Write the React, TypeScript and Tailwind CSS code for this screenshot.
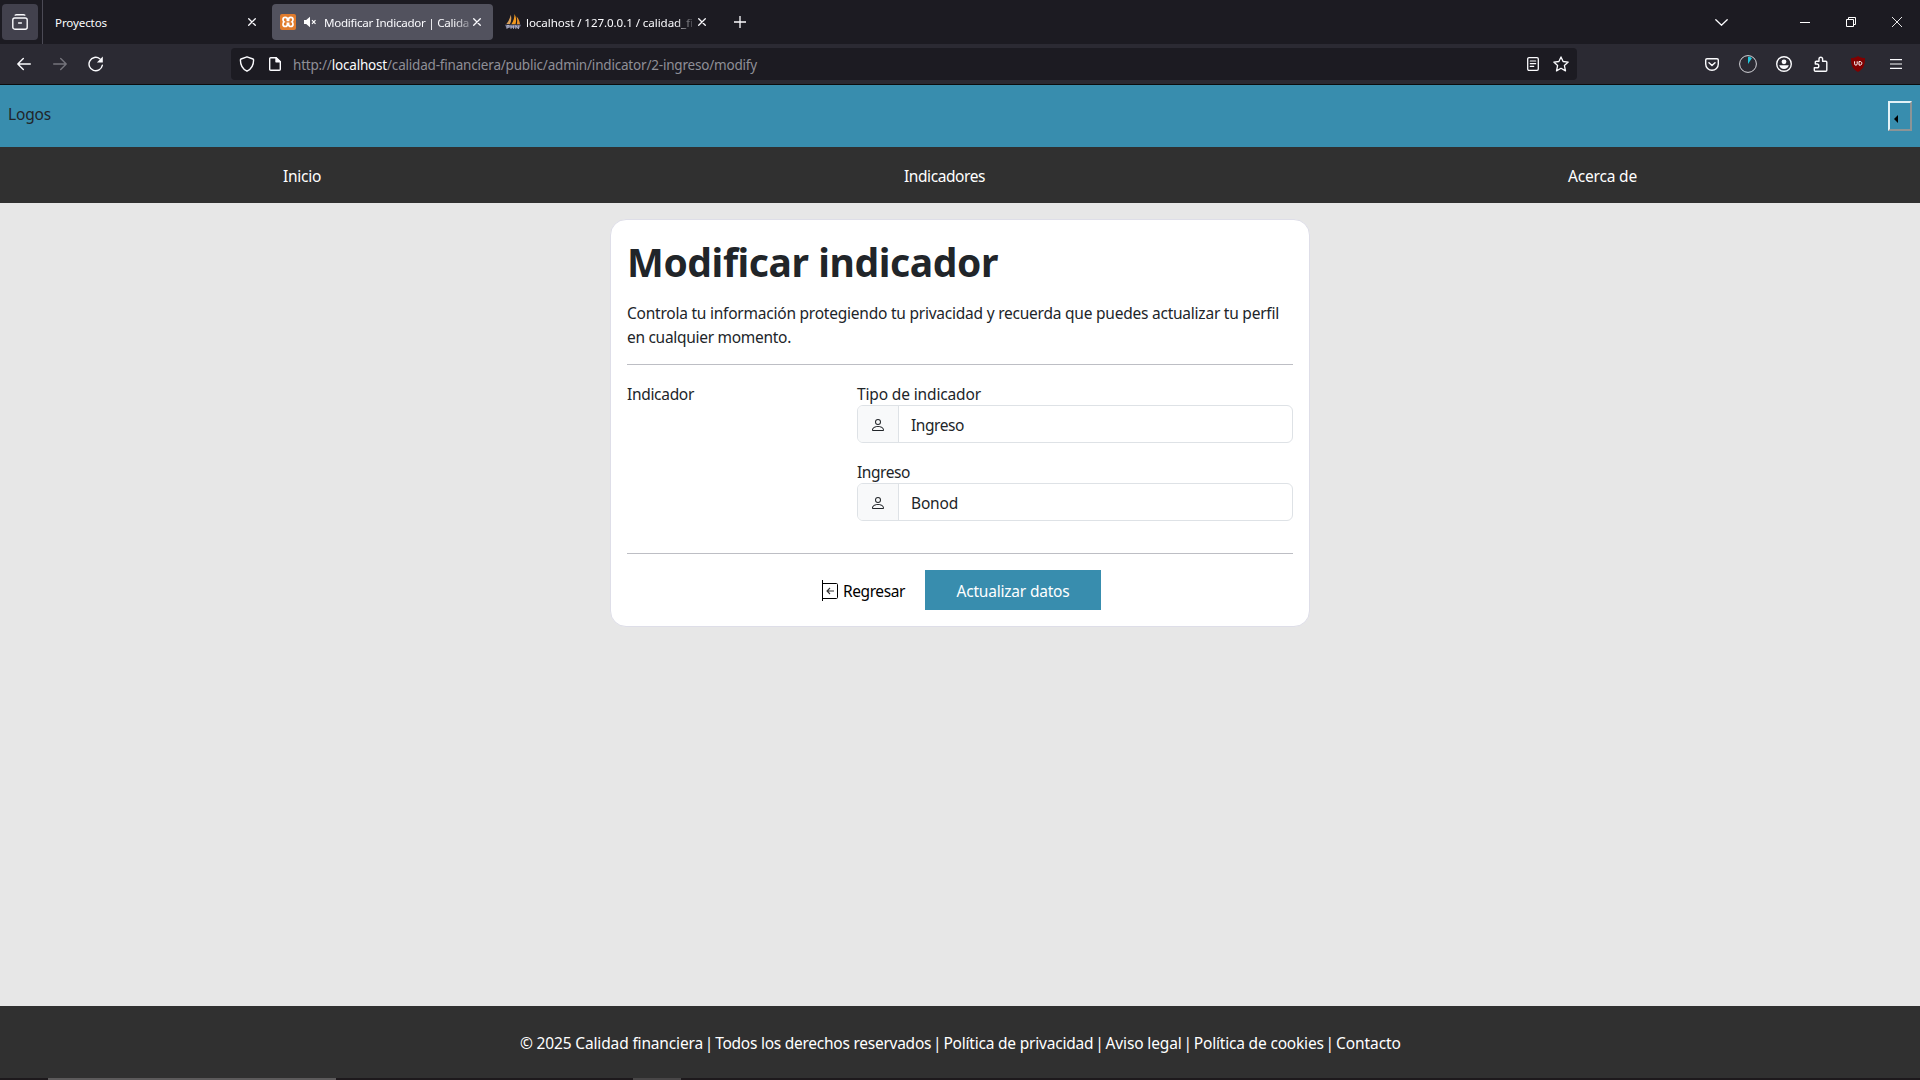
import { Fragment, useLayoutEffect, useRef, type ReactNode } from "react";

/* Spreads its letters so that the line takes exactly `width` pixels. */
function Fit({ width, className = "", children }: { width: number; className?: string; children: ReactNode }) {
  const ref = useRef<HTMLSpanElement>(null);
  useLayoutEffect(() => {
    const el = ref.current;
    if (!el) return;
    el.style.letterSpacing = "0px";
    const count = (el.textContent ?? "").length;
    const natural = el.getBoundingClientRect().width;
    el.style.letterSpacing = `${(width - natural) / count}px`;
  }, [width]);
  return (
    <span ref={ref} className={`inline-block whitespace-pre ${className}`}>
      {children}
    </span>
  );
}

function Close({ className = "" }: { className?: string }) {
  return (
    <svg className={`size-[8px] shrink-0 ${className}`} viewBox="0 0 8 8" stroke="#fbfbfe" strokeWidth="1.3" strokeLinecap="round">
      <path d="M.7.7l6.6 6.6M7.3.7L.7 7.3" />
    </svg>
  );
}

function TabBar() {
  return (
    <div className="flex h-[44px] items-center bg-[#1c1b22]">
      <div className="ml-[2px] flex size-9 items-center justify-center rounded-[4px] bg-[#42414d]">
        <svg className="size-4" viewBox="0 0 16 16" fill="none" stroke="#fbfbfe" strokeWidth="1.4" strokeLinecap="round">
          <path d="M3.2 1.1C3.6.9 4 .8 4.500.8h7c.5 0 .9.1 1.300.3M6.600 9h2.800" />
          <rect x=".8" y="4" width="14.400" height="11.200" rx="2" />
        </svg>
      </div>
      <div className="ml-[4px] h-full w-px bg-[#4b4a55]" />
      <div className="ml-[3px] flex h-9 w-[220px] items-center pl-[9px] text-[11.6px] text-[#fbfbfe]">
        <Fit width={52} className="pt-px">Proyectos</Fit>
        <Close className="ml-auto mr-[10px]" />
      </div>
      <div className="ml-[6px] flex h-9 w-[221px] items-center rounded-[4px] bg-[#52525e] pl-[8px] text-[11.6px] text-[#fbfbfe]">
        <svg className="size-4 shrink-0" viewBox="0 0 16 16" fill="none">
          <rect width="16" height="16" rx="2" fill="#e07b2c" />
          <path
            d="M5.200 3.400C3.600 3.400 3 4.200 3 5.500c0 1 .4 1.900 1.100 2.400C3.300 8.400 3 9.200 3 10.200c0 1.500.8 2.300 2.200 2.300 1.500 0 2.200-.9 2.200-2.300V9.300h1.200v.9c0 1.400.7 2.300 2.200 2.300 1.400 0 2.200-.8 2.200-2.300 0-1-.3-1.800-1.100-2.300.7-.5 1.100-1.400 1.100-2.400 0-1.300-.6-2.100-2.200-2.100-1.300 0-2.200.8-2.200 2v1H7.400v-1c0-1.200-.9-2-2.200-2z"
            stroke="#fff"
            strokeWidth="1.700"
          />
        </svg>
        <svg className="ml-[8px] h-3 w-[12px] shrink-0" viewBox="0 0 12 12">
          <path d="M0 4h2.200L6 .7v10.600L2.200 8H0z" fill="#fff" />
          <path d="M8 4.200l3.500 3.600M11.500 4.200L8 7.800" stroke="#fff" strokeWidth="1.200" />
        </svg>
        <div className="ml-[8px] w-[145px] overflow-hidden pt-px [mask-image:linear-gradient(to_right,black_130px,transparent_152px)]">
          <Fit width={145}>Modificar Indicador | Calida</Fit>
        </div>
        <Close className="ml-auto mr-[12px]" />
      </div>
      <div className="ml-[4px] flex h-9 w-[221px] items-center pl-[8px] text-[11.6px] text-[#fbfbfe]">
        <svg className="size-4 shrink-0" viewBox="0 0 16 16">
          <path d="M5.800.8C6.600 4 6.500 7 5 10H1.300C3.600 7.300 5 4.200 5.800.8z" fill="#d9a05a" />
          <path d="M9.500 0c1.800 3.300 2.200 6.500 1 10.200H6.300C8.600 7 9.500 3.500 9.500 0z" fill="#f29a1f" />
          <path d="M11.500 2.600c2 2 3.200 4.500 3.500 7.600h-3.200c.6-2.500.5-5-.3-7.600z" fill="#e8912a" />
          <path d="M0 10.800h16l-1.300 3H1.300z" fill="#6f7390" />
          <path d="M2 15v-3.500h2v1.700H2M6 15v-3.500M6 13h2.500M8.500 15v-3.500M10.800 15v-3.500l2.700 3.500v-3.500" stroke="#b7b9cc" strokeWidth=".8" fill="none" />
        </svg>
        <div className="ml-[5px] w-[167px] overflow-hidden pt-px [mask-image:linear-gradient(to_right,black_150px,transparent_170px)]">
          <Fit width={167}>localhost / 127.0.0.1 / calidad_fi</Fit>
        </div>
        <Close className="ml-auto mr-[12px]" />
      </div>
      <svg className="ml-[16px] size-3" viewBox="0 0 12 12" stroke="#fbfbfe" strokeWidth="1.300">
        <path d="M6 0v12M0 6h12" />
      </svg>
      <svg className="ml-auto h-[7px] w-[13px]" viewBox="0 0 13 7" fill="none" stroke="#fbfbfe" strokeWidth="1.300" strokeLinecap="round">
        <path d="M.8.7l5.700 5.500L12.200.7" />
      </svg>
      <div className="ml-[72px] h-px w-[10px] bg-white" />
      <svg className="ml-[36px] size-[10px]" viewBox="0 0 10 10" fill="none" stroke="#fff">
        <path d="M.5 2.500h7v7h-7zM2.500 2.500v-2h7v7h-2" />
      </svg>
      <svg className="ml-[36px] mr-[18px] size-[10px]" viewBox="0 0 10 10" stroke="#fff" strokeWidth=".9">
        <path d="M0 0l10 10M10 0L0 10" />
      </svg>
    </div>
  );
}

function Toolbar() {
  return (
    <div className="flex h-[41px] items-center border-b border-[#0c0c0d] bg-[#2b2a33]">
      <svg className="ml-[17px] size-[14px]" viewBox="0 0 14 14" fill="none" stroke="#fbfbfe" strokeWidth="1.400" strokeLinecap="round" strokeLinejoin="round">
        <path d="M13.300 7H.8M6.300 1.500L.8 7l5.500 5.500" />
      </svg>
      <svg className="ml-[22px] size-[14px]" viewBox="0 0 14 14" fill="none" stroke="#75747c" strokeWidth="1.400" strokeLinecap="round" strokeLinejoin="round">
        <path d="M.7 7h12.500M7.700 1.500L13.200 7l-5.500 5.500" />
      </svg>
      <svg className="ml-[21px] size-4" viewBox="0 0 16 16" fill="none">
        <path d="M14.300 9.300A6.700 6.700 0 1 1 11.800 2.700" stroke="#fbfbfe" strokeWidth="1.400" strokeLinecap="round" />
        <path d="M14.800.6v5.900H8.900z" fill="#fbfbfe" />
      </svg>
      <div className="ml-[127px] flex h-8 w-[1346px] items-center rounded-[4px] bg-[#1c1b22]">
        <svg className="ml-[8px] size-4" viewBox="0 0 16 16" fill="none" stroke="#fbfbfe" strokeWidth="1.400" strokeLinejoin="round">
          <path d="M8 .8l6 2.200c.4.200.6.500.6.900C14.600 9.500 12.300 13 8 15.200 3.700 13 1.400 9.500 1.400 3.900c0-.4.200-.7.600-.9z" />
        </svg>
        <svg className="ml-[14px] h-[14px] w-[12px]" viewBox="0 0 12 14" fill="none" stroke="#fbfbfe" strokeWidth="1.400" strokeLinejoin="round">
          <path d="M1.700.7h5.500l4.100 4v7.600c0 .6-.4 1-1 1H1.700c-.6 0-1-.4-1-1V1.700c0-.6.4-1 1-1z" />
          <path d="M7 .8v4h4.200z" fill="#fbfbfe" />
        </svg>
        <div className="ml-[12px] pt-[2px] text-[13.500px] leading-5 text-[#8f8f97]">
          <Fit width={464}>
            http://<span className="text-[#fbfbfe]">localhost</span>/calidad-financiera/public/admin/indicator/2-ingreso/modify
          </Fit>
        </div>
        <svg className="ml-auto h-[14px] w-[12px]" viewBox="0 0 12 14" fill="none" stroke="#fbfbfe" strokeWidth="1.300" strokeLinecap="round">
          <rect x=".7" y=".7" width="10.600" height="12.600" rx="1.300" />
          <path d="M3.300 4h5.400M3.300 6.700h5.400M3.300 9.400h3.400" strokeWidth="1.200" />
        </svg>
        <svg className="ml-[14px] mr-[8px] size-4" viewBox="0 0 16 16" fill="none" stroke="#fbfbfe" strokeWidth="1.300" strokeLinejoin="round">
          <path d="M8 .9l2.100 4.600 5.100.6-3.800 3.500 1.100 5.300L8 12.300l-4.500 2.600 1.100-5.300L.8 6.100l5.100-.6z" />
        </svg>
      </div>
      <svg className="ml-[128px] h-[13px] w-[14px]" viewBox="0 0 14 13" fill="none" stroke="#fbfbfe" strokeWidth="1.400" strokeLinecap="round" strokeLinejoin="round">
        <path d="M2 .8h10c.7 0 1.300.6 1.300 1.300V6A6.300 6.300 0 0 1 .7 6V2.100C.7 1.400 1.300.8 2 .8z" />
        <path d="M4 4.800l3 2.700 3-2.700" strokeWidth="1.500" />
      </svg>
      <svg className="ml-[20px] size-[18px]" viewBox="0 0 18 18">
        <circle cx="9" cy="9" r="8.400" fill="none" stroke="#d5d5da" />
        <path d="M9 9V1.800c1.600 0 2.800.4 4 1.200z" fill="#22c7dc" />
      </svg>
      <svg className="ml-[19px] size-4" viewBox="0 0 16 16">
        <circle cx="8" cy="8" r="7.300" fill="none" stroke="#fbfbfe" strokeWidth="1.400" />
        <circle cx="8" cy="5.800" r="2.400" fill="#fbfbfe" />
        <path d="M3.200 9.300h9.600A5 5 0 0 1 8 13a5 5 0 0 1-4.800-3.700z" fill="#fbfbfe" />
      </svg>
      <svg className="ml-[21px] h-4 w-[15px]" viewBox="0 0 15 16" fill="none" stroke="#fbfbfe" strokeWidth="1.400" strokeLinejoin="round">
        <path d="M2.300 15.200h10.500c.6 0 1-.4 1-1V6.300c0-.6-.4-1-1-1H9.600V3a1.800 1.800 0 0 0-3.600 0v2.300H3.300c-.6 0-1 .4-1 1V8h1.600a1.700 1.700 0 0 1 0 3.800H1.300v2.400c0 .6.400 1 1 1z" />
      </svg>
      <svg className="ml-[22px] size-4" viewBox="0 0 16 16" fill="none">
        <path d="M8 0c2 1.500 4.300 2 7 2 0 7-1 10.500-7 14C2 12.500 1 9 1 2c2.700 0 5-.5 7-2z" fill="#800000" />
        <path d="M4.600 5.300v2.500c0 .9.500 1.400 1.300 1.400s1.300-.5 1.300-1.400V5.300M9 5.500h1c1.200 0 1.800.7 1.800 1.800S11.200 9.100 10 9.100H9z" stroke="#fff" />
      </svg>
      <svg className="ml-auto mr-[18px] h-[10px] w-[12px]" viewBox="0 0 12 10" stroke="#fbfbfe" strokeWidth="1.200">
        <path d="M0 .7h12M0 5h12M0 9.300h12" />
      </svg>
    </div>
  );
}

function Field({ label, labelWidth, value, valueWidth }: { label: string; labelWidth: number; value: string; valueWidth: number }) {
  return (
    <div className="h-[78px]">
      <div className="h-6">
        <Fit width={labelWidth}>{label}</Fit>
      </div>
      <div className="-mt-px flex h-[38px] overflow-hidden rounded-[6px] border border-[#dee2e6] bg-white">
        <div className="flex w-[41px] items-center justify-center border-r border-[#dee2e6] bg-[#f8f9fa]">
          <svg className="mt-[2px] size-4" viewBox="0 0 16 16" fill="#212529">
            <path d="M8 8a3 3 0 1 0 0-6 3 3 0 0 0 0 6m2-3a2 2 0 1 1-4 0 2 2 0 0 1 4 0m4 8c0 1-1 1-1 1H3s-1 0-1-1 1-4 6-4 6 3 6 4m-1-.004c-.001-.246-.154-.986-.832-1.664C11.516 10.680 10.289 10 8 10s-3.516.68-4.168 1.332c-.678.678-.83 1.418-.832 1.664z" />
          </svg>
        </div>
        <div className="pl-3 pt-[7px]">
          <Fit width={valueWidth}>{value}</Fit>
        </div>
      </div>
    </div>
  );
}

function IndicatorCard() {
  return (
    <main className="mx-auto mt-[16px] h-[408px] w-[700px] rounded-[16px] border border-[#dedee8] bg-white px-4">
      <h1 className="pt-[18px] text-[39px] font-bold leading-[48px]">
        <Fit width={371}>Modificar indicador</Fit>
      </h1>
      <div className="mt-[15px] h-12">
        <Fit width={652}>Controla tu información protegiendo tu privacidad y recuerda que puedes actualizar tu perfil</Fit>
        <Fit width={164}>en cualquier momento.</Fit>
      </div>
      <div className="mt-[15px] h-px bg-[#bdbec4]" />
      <div className="flex h-[188px] pt-[17px]">
        <div className="w-[230px]">
          <Fit width={67}>Indicador</Fit>
        </div>
        <div className="w-[436px]">
          <Field label="Tipo de indicador" labelWidth={124} value="Ingreso" valueWidth={53} />
          <Field label="Ingreso" labelWidth={53} value="Bonod" valueWidth={47} />
        </div>
      </div>
      <div className="h-px bg-[#bdbec4]" />
      <div className="mt-[16px] flex h-10">
        <div className="ml-[195px] flex w-[103px] items-center text-black">
          <svg className="h-[21px] w-[17px]" viewBox="0 0 17 21" fill="none" stroke="#000">
            <path d="M.5 0v21M.5 3.500h14c.6 0 1 .4 1 1v13c0 .6-.4 1-1 1H.5" />
            <path d="M12 11H5M8 8l-3 3 3 3" stroke="#333" strokeWidth="1.100" />
          </svg>
          <div className="ml-[4px] pt-[2px]">
            <Fit width={62}>Regresar</Fit>
          </div>
        </div>
        <button className="flex w-[176px] items-center justify-center bg-[#388dae] pt-[2px] text-white">
          <Fit width={113}>Actualizar datos</Fit>
        </button>
      </div>
    </main>
  );
}

const footerItems = [
  { text: "© 2025 Calidad financiera", width: 183 },
  { text: "Todos los derechos reservados", width: 216 },
  { text: "Política de privacidad", width: 150 },
  { text: "Aviso legal", width: 76 },
  { text: "Política de cookies", width: 130 },
  { text: "Contacto", width: 65 },
];

export default function App() {
  return (
    <div className="flex h-[1080px] w-[1920px] flex-col overflow-hidden bg-[#e7e7e7] font-['Noto_Sans',sans-serif] text-[15.500px] leading-6 text-[#212529]">
      <TabBar />
      <Toolbar />
      <header className="flex h-[62px] justify-between bg-[#388dae] px-2">
        <div className="pt-[17px]">
          <Fit width={43}>Logos</Fit>
        </div>
        <div className="mt-[16px] flex h-[30px] w-6 border-2 border-b-[#8c9496] border-l-[#e4f2f7] border-r-[#8c9496] border-t-[#e4f2f7]">
          <svg className="ml-[4px] mt-[12px] h-[8px] w-[4px]" viewBox="0 0 4 8">
            <path d="M4 0v8L0 4z" fill="#000" />
          </svg>
        </div>
      </header>
      <nav className="flex h-[56px] bg-[#303030] pt-[17px] text-white">
        <div className="ml-[283px] w-[621px]">
          <Fit width={38}>Inicio</Fit>
        </div>
        <div className="w-[664px]">
          <Fit width={81}>Indicadores</Fit>
        </div>
        <Fit width={69}>Acerca de</Fit>
      </nav>
      <div className="h-[803px]">
        <IndicatorCard />
      </div>
      <footer className="flex h-[72px] bg-[#303030] pl-[520px] pt-[25px] text-white">
        {footerItems.map((item, i) => (
          <Fragment key={item.text}>
            {i > 0 && <span className="flex w-[12.2px] justify-center">|</span>}
            <Fit width={item.width}>{item.text}</Fit>
          </Fragment>
        ))}
      </footer>
      <div className="flex h-[2px] bg-[#1d191c]">
        <div className="ml-[48px] w-[288px] bg-[#5c5a5b]" />
        <div className="ml-[297px] w-[48px] bg-[#484647]" />
      </div>
    </div>
  );
}
